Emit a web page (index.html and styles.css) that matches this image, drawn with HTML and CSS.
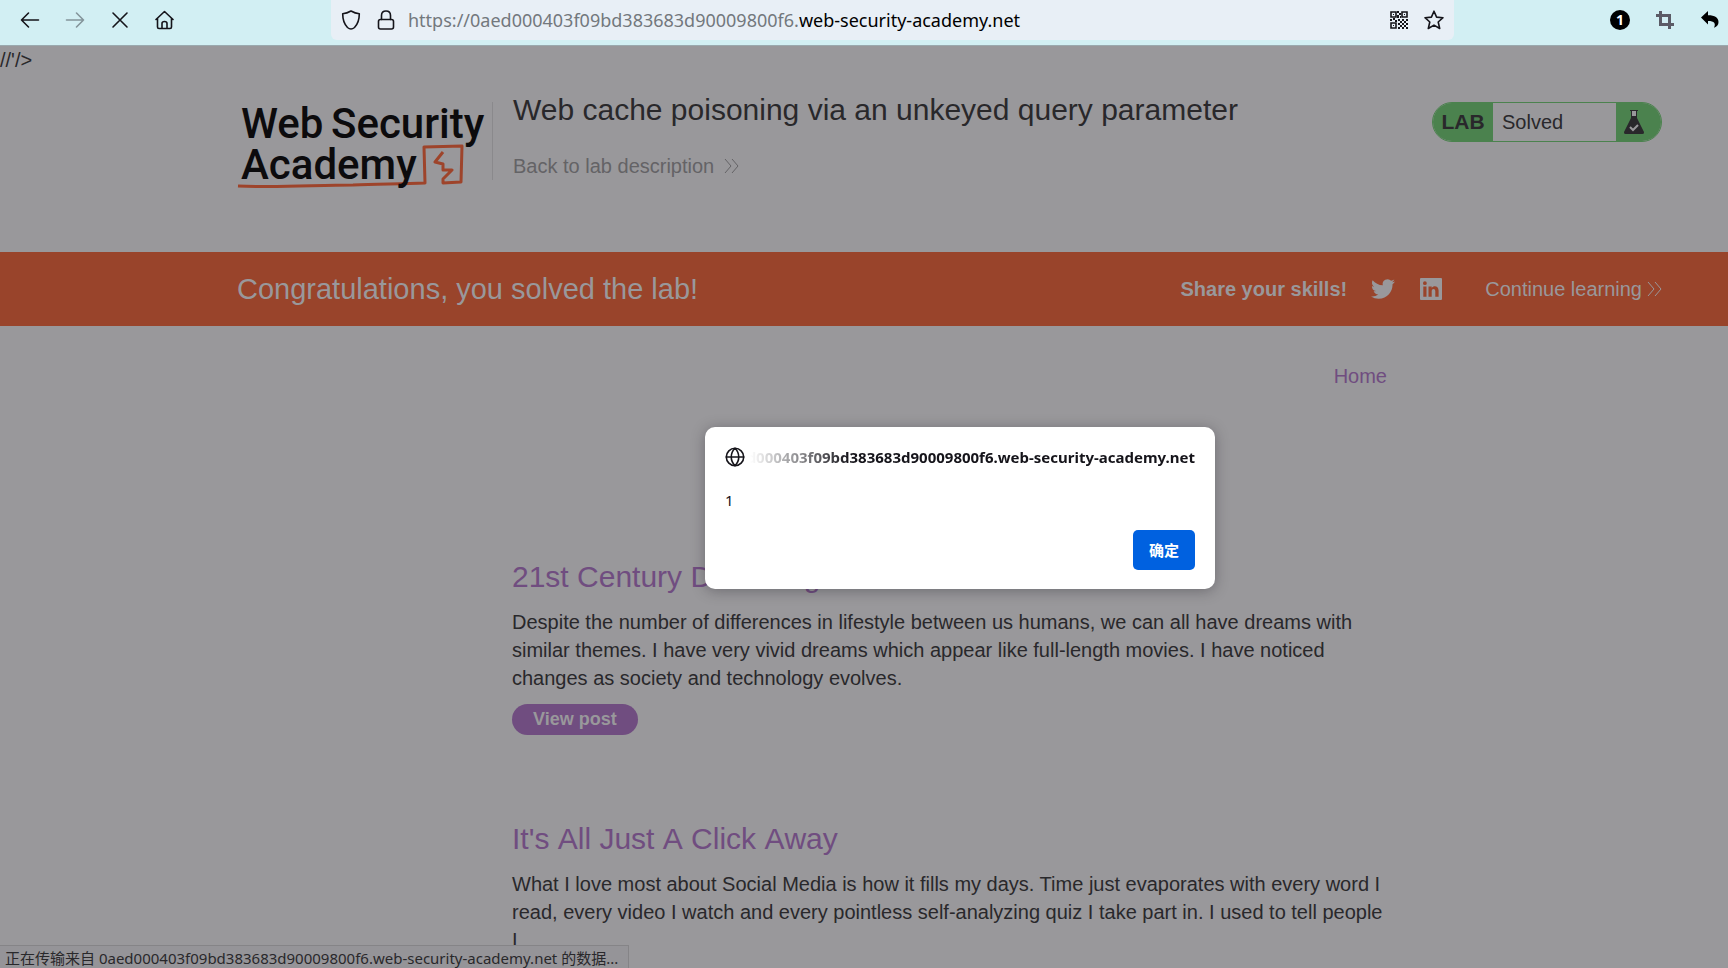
FILE: index.html
```html
<!DOCTYPE html>
<html lang="en">
<head>
<meta charset="utf-8">
<title>Web cache poisoning via an unkeyed query parameter</title>
<link rel="stylesheet" href="styles.css">
</head>
<body>
<div class="toolbar">
  <div class="nav-buttons">
    <button class="tool" aria-label="Back"><svg class="ico" viewBox="0 0 20 20"><path d="M18.500 10H1.500M8.500 3l-7 7 7 7"/></svg></button>
    <button class="tool tool-off" aria-label="Forward" disabled><svg class="ico" viewBox="0 0 20 20"><path d="M1.500 10h17M11.500 3l7 7-7 7"/></svg></button>
    <button class="tool" aria-label="Stop"><svg class="ico" viewBox="0 0 20 20"><path d="M3 3l14 14M17 3L3 17"/></svg></button>
    <button class="tool" aria-label="Home"><svg class="ico" viewBox="0 0 20 20"><path d="M1 9.500L9.500 1.500l8.500 8M2.500 8.500V17q0 1.500 1.500 1.500h11q1.500 0 1.500-1.500V8.500M7 18.500v-5q0-2 2.500-2t2.500 2v5"/></svg></button>
  </div>
  <div class="address">
    <svg class="ico" viewBox="0 0 20 20"><path d="M10 1c3 1.700 5.500 2.500 8.300 2.800 0 7-1.800 10.700-4.800 13.700-2.400 2-4.600 2-7 0-3-3-4.800-6.700-4.800-13.700C4.500 3.500 7 2.700 10 1z"/></svg>
    <svg class="ico" viewBox="0 0 20 20"><rect x="2.500" y="9.500" width="15" height="9.500" rx="2"/><path d="M5.500 9.500V5.500q0-4.500 4.500-4.500t4.500 4.500v4"/></svg>
    <div class="url"><span class="url-dim">https://0aed000403f09bd383683d90009800f6.</span>web-security-academy.net</div>
    <button class="tool-mini" aria-label="QR code"><svg class="ico qr" viewBox="0 0 18 18"><path d="M1 1h5v5H1zM12 1h5v5h-5zM1 12h5v5H1z"/><path class="fill" d="M3 3h1v1H3zM14 3h1v1h-1zM3 14h1v1H3zM7 0h2v2H7zM9 2h2v2H9zM7 4h2v3H7zM10 5h1v2h-1zM0 8h2v2H0zM3 7h2v2H3zM5 9h2v2H5zM8 8h2v2H8zM10 10h2v2h-2zM12 8h2v2h-2zM14 10h2v2h-2zM16 8h2v2h-2zM8 12h2v2H8zM12 12h2v2h-2zM16 12h2v2h-2zM10 14h2v2h-2zM14 14h2v2h-2zM8 16h2v2H8zM12 16h2v2h-2zM16 16h2v2h-2z"/></svg></button>
    <button class="tool-mini" aria-label="Bookmark"><svg class="ico" viewBox="0 0 20 20"><path d="M10 1.200l2.600 5.900 6.400.6-4.800 4.300 1.500 6.500L10 15.100l-5.700 3.400 1.500-6.500L1 7.700l6.400-.6z"/></svg></button>
  </div>
  <div class="extensions">
    <button class="tool badge" aria-label="One notification">1</button>
    <button class="tool tool-grey" aria-label="Crop"><svg class="ico thick" viewBox="0 0 20 20"><path d="M5.500 1v13.500H19M1 5.500h13.500V19"/></svg></button>
    <button class="tool" aria-label="Undo"><svg class="ico solid" viewBox="0 0 20 20"><path d="M1 7.500L8 1v4.300c7 0 10.500 2.700 10.500 6.700 0 3-1.500 4.700-4.500 5.700 2-4.200.5-6.700-6-6.700v3.500z"/></svg></button>
  </div>
</div>

<main class="page">
  <div class="stray">//'/&gt;</div>
  <header class="lab-header">
    <a class="logo" href="#" aria-label="Web Security Academy">
      <svg viewBox="0 0 256 96" width="256" height="96">
        <path class="mark" d="M1 84c40 2 78-1 115-1 25-1 48-1 72-2l-1-36 38-1-1 36-18 1v-4l9-9h-9v-6l-8-2 8-10"/>
        <g class="wordmark"><text x="4" y="36">Web</text><text x="94" y="36">Security</text><text x="4" y="77">Academy</text></g>
      </svg>
    </a>
    <div class="title-block">
      <h1 class="lab-title">Web cache poisoning via an unkeyed query parameter</h1>
      <a class="back" href="#">Back to lab description <svg class="chev" viewBox="0 0 16 16"><path d="M1 1l6 7-6 7M8 1l6 7-6 7"/></svg></a>
    </div>
    <div class="status-pill">
      <span class="pill-lab">LAB</span>
      <span class="pill-state">Solved</span>
      <span class="pill-flask"><svg viewBox="0 0 22 26" width="22" height="26"><path class="flask" d="M8 6h6v3l7 14q.5 2-1.500 2h-17Q.500 25 1 23L8 9z"/><path class="glass" d="M9 2h4v5H9z"/><path class="rim" d="M7 1.500h8M8.500 2v6M13.500 2v6"/><path class="check" d="M7 18l3 3 5-5"/></svg></span>
    </div>
  </header>

  <section class="banner">
    <h2 class="congrats">Congratulations, you solved the lab!</h2>
    <span class="share">Share your skills!</span>
    <a class="social" href="#" aria-label="Twitter"><svg viewBox="0 0 24 24" width="24" height="24"><path d="M23.950 4.570a10 10 0 0 1-2.820.770 4.960 4.960 0 0 0 2.160-2.720c-.950.550-2 .950-3.130 1.180a4.920 4.920 0 0 0-8.380 4.480C7.690 8.100 4.070 6.130 1.640 3.160a4.820 4.820 0 0 0-.670 2.480c0 1.710.870 3.210 2.190 4.100a4.900 4.900 0 0 1-2.230-.620v.060a4.920 4.920 0 0 0 3.950 4.830 5 5 0 0 1-2.210.080 4.940 4.940 0 0 0 4.600 3.420A9.870 9.870 0 0 1 0 19.540a14 14 0 0 0 7.550 2.210c9.050 0 14-7.500 14-13.990 0-.210 0-.420-.020-.630a9.940 9.940 0 0 0 2.460-2.550z"/></svg></a>
    <a class="social" href="#" aria-label="LinkedIn"><svg viewBox="0 0 24 24" width="24" height="24"><path fill-rule="evenodd" d="M2 1h20q1 0 1 1v20q0 1-1 1H2q-1 0-1-1V2q0-1 1-1zM4.300 9.500v10.200h3.200V9.500zM5.900 4.300a1.900 1.900 0 1 0 0 3.800 1.900 1.900 0 0 0 0-3.800zM9.500 9.500v10.200h3.200v-5.500c0-3 3.600-3 3.600 0v5.500h3.300v-6.200c0-5-5.200-5.400-6.900-2.600V9.500z"/></svg></a>
    <a class="continue" href="#">Continue learning <svg class="chev" viewBox="0 0 16 16"><path d="M1 1l6 7-6 7M8 1l6 7-6 7"/></svg></a>
  </section>

  <div class="blog">
    <nav class="blog-nav"><a class="home" href="#">Home</a></nav>
    <article class="post">
      <h2 class="post-title">21st Century Dreaming</h2>
      <p class="post-text">Despite the number of differences in lifestyle between us humans, we can all have dreams with similar themes. I have very vivid dreams which appear like full-length movies. I have noticed changes as society and technology evolves.</p>
      <a class="view" href="#">View post</a>
    </article>
    <article class="post">
      <h2 class="post-title">It's All Just A Click Away</h2>
      <p class="post-text">What I love most about Social Media is how it fills my days. Time just evaporates with every word I read, every video I watch and every pointless self-analyzing quiz I take part in. I used to tell people I</p>
    </article>
  </div>
</main>

<div class="dialog" role="alertdialog" aria-labelledby="host">
  <div class="dialog-head">
    <svg class="ico globe" viewBox="0 0 20 20"><circle cx="10" cy="10" r="8.700"/><path d="M1.300 10h17.400M10 1.300c-5 5-5 12.400 0 17.400M10 1.300c5 5 5 12.400 0 17.400"/></svg>
    <div class="host" id="host"><span>0aed000403f09bd383683d90009800f6.web-security-academy.net</span></div>
  </div>
  <p class="message">1</p>
  <button class="ok" lang="zh-CN">确定</button>
</div>

<div class="transfer" lang="zh-CN">正在传输来自 0aed000403f09bd383683d90009800f6.web-security-academy.net 的数据...</div>
</body>
</html>
```
FILE: styles.css
```css
* { box-sizing: border-box; }

body {
  margin: 0;
  height: 100vh;
  overflow: hidden;
  display: flex;
  flex-direction: column;
  background: #99989b;
  color: #29282b;
  font: 20px/28px "Liberation Sans", Arial, sans-serif;
}

h1, h2, p { margin: 0; font-weight: 400; }
a { text-decoration: none; color: inherit; }
button { border: 0; padding: 0; background: none; color: inherit; font: inherit; }

/* Browser toolbar */
.toolbar {
  display: flex;
  flex: none;
  height: 46px;
  padding-left: 20px;
  padding-right: 8px;
  background: #d2eff3;
  border-bottom: 1px solid #9aa9ae;
  color: #15141a;
}
.nav-buttons, .extensions { display: flex; height: 40px; align-items: center; gap: 25px; }
.nav-buttons { width: 311px; flex: none; }
.extensions { margin-left: auto; }
.tool, .tool-mini { width: 20px; height: 20px; flex: none; }
.tool-off { color: #84959b; }
.tool-grey { color: #5b5b66; }
.ico {
  display: block;
  width: 20px;
  height: 20px;
  flex: none;
  fill: none;
  stroke: currentColor;
  stroke-width: 1.600;
  stroke-linecap: round;
  stroke-linejoin: round;
}
.thick { stroke-width: 3; stroke-linecap: butt; stroke-linejoin: miter; }
.solid { fill: #000; stroke: none; }
.qr { width: 18px; height: 18px; margin: 1px; stroke-linejoin: miter; }
.qr .fill { fill: currentColor; stroke: none; }
.badge {
  border-radius: 50%;
  background: #000;
  color: #fff;
  font: 700 14px/20px "Noto Sans", sans-serif;
}
.address {
  display: flex;
  align-items: center;
  flex: 0 1 1123px;
  height: 40px;
  padding: 0 10px;
  gap: 15px;
  border-radius: 0 0 6px 6px;
  background: #e8eff6;
}
.url {
  flex: 1;
  margin-left: -3px;
  color: #000;
  font: 18px/24px "Noto Sans", "Open Sans", sans-serif;
  white-space: nowrap;
}
.url-dim { color: #73787d; }

/* Lab header */
.page { flex: 1; min-height: 0; overflow: hidden; }
.stray { height: 56px; }
.lab-header {
  display: flex;
  align-items: flex-start;
  height: 150px;
  padding-right: 66px;
  padding-left: 237px;
}
.logo { width: 256px; height: 78px; border-right: 1px solid #8a898c; }
.logo svg { display: block; overflow: visible; }
.wordmark { font: 500 42px Roboto, sans-serif; fill: #0c0b0d; }
.mark { fill: none; stroke: #9e442b; stroke-width: 3; stroke-linejoin: round; }
.title-block { flex: 1; padding-left: 20px; }
.lab-title { font-size: 30px; line-height: 34px; margin-top: -9px; }
.back { display: inline-flex; align-items: center; gap: 10px; margin-top: 25px; color: #646366; }
.chev { width: 16px; height: 16px; fill: none; stroke: currentColor; stroke-width: 1; }
.status-pill {
  display: flex;
  width: 230px;
  height: 40px;
  border: 1px solid #4b824e;
  border-radius: 20px;
  overflow: hidden;
  line-height: 38px;
}
.pill-lab { width: 60px; background: #4b824e; text-align: center; font-weight: 700; font-size: 21px; }
.pill-state { flex: 1; padding-left: 9px; }
.pill-flask { width: 45px; padding: 6px 7px; background: #4b824e; }
.pill-flask svg { display: block; }
.flask { fill: #29282b; }
.glass { fill: #99989b; }
.rim { fill: none; stroke: #29282b; }
.check { fill: none; stroke: #99989b; stroke-width: 2; }

/* Solved banner */
.banner {
  display: flex;
  align-items: center;
  height: 74px;
  padding-right: 65px;
  padding-left: 237px;
  background: #99442b;
  color: #99989b;
}
.congrats { font-size: 29px; line-height: 36px; margin-right: auto; }
.share { font-weight: 700; }
.social { margin-left: 24px; height: 24px; }
.social svg { display: block; fill: currentColor; }
.continue { display: flex; align-items: center; gap: 5px; margin-left: 42px; }

/* Blog list */
.blog { padding: 36px 341px 0 512px; }
.blog-nav { display: flex; justify-content: flex-end; margin-bottom: 169px; }
.home, .post-title { color: #704d80; }
.post { margin-bottom: 86px; }
.post-title { font-size: 30px; line-height: 36px; margin-bottom: 13px; font-kerning: none; }
.view {
  display: inline-block;
  margin-top: 12px;
  padding: 0 21px;
  border-radius: 16px;
  background: #704d80;
  color: #99989b;
  font-weight: 700;
  font-size: 18px;
  line-height: 31px;
}

/* Alert box over the page */
.dialog {
  position: absolute;
  top: 427px;
  left: 705px;
  width: 510px;
  padding: 20px 20px 19px;
  border-radius: 10px;
  background: #fff;
  box-shadow: 0 2px 14px rgba(28, 27, 34, .35);
  color: #15141a;
  font: 15px/20px "Noto Sans", "Noto Sans CJK SC", sans-serif;
}
.dialog-head { display: flex; align-items: center; gap: 5px; }
.host {
  display: flex;
  flex: 1;
  min-width: 0;
  justify-content: flex-end;
  overflow: hidden;
  font-weight: 700;
  white-space: nowrap;
  -webkit-mask-image: linear-gradient(to right, transparent, #000 100px);
  mask-image: linear-gradient(to right, transparent, #000 100px);
}
.message { margin: 23px 0 20px; }
.ok {
  display: block;
  width: 62px;
  height: 40px;
  margin-left: auto;
  border-radius: 5px;
  background: #0061e0;
  color: #fff;
  font: 700 15px/38px "Noto Sans CJK SC", sans-serif;
}

.transfer {
  position: absolute;
  bottom: 0;
  left: 0;
  height: 23px;
  padding: 0 10px 0 5px;
  border: 1px solid #858487;
  border-width: 1px 1px 0 0;
  background: #959498;
  font: 15px/24px "Noto Sans", "Noto Sans CJK SC", sans-serif;
  white-space: nowrap;
}
```
